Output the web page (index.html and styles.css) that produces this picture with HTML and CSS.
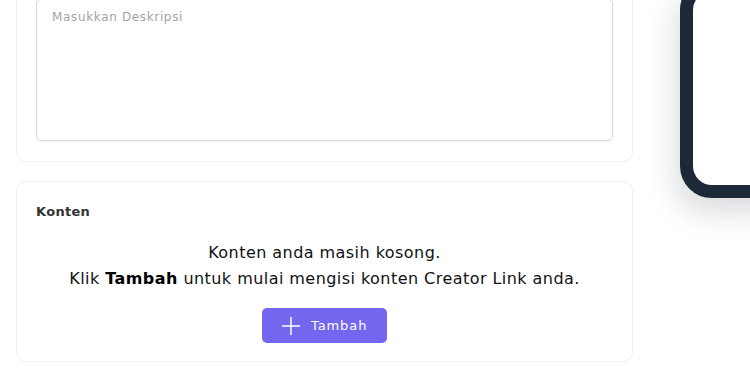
FILE: index.html
```html
<!DOCTYPE html>
<html lang="id">
<head>
<meta charset="utf-8">
<title>Creator Link</title>
<link rel="stylesheet" href="styles.css">
</head>
<body>
<div class="page">
  <div class="main">
    <section class="card">
      <textarea class="textarea" placeholder="Masukkan Deskripsi"></textarea>
    </section>
    <section class="card card-content">
      <div class="label">Konten</div>
      <div class="empty">
        <p class="empty-text">Konten anda masih kosong.<br>Klik <b>Tambah</b> untuk mulai mengisi konten Creator Link anda.</p>
        <button class="btn" type="button">
          <svg class="btn-icon" width="20" height="20" viewBox="0 0 20 20" aria-hidden="true"><path d="M10 1.5V18.5M1.5 10H18.5" stroke="#fff" stroke-width="1.5" stroke-linecap="round" fill="none"/></svg>
          <span>Tambah</span>
        </button>
      </div>
    </section>
  </div>
  <aside class="phone-col">
    <div class="phone"></div>
  </aside>
</div>
</body>
</html>
```

FILE: styles.css
```css
* { box-sizing: border-box; }
html, body { margin: 0; padding: 0; background: #fff; overflow: hidden; }
body { font-family: "DejaVu Sans", "Noto Sans", sans-serif; color: #111; }
.page {
  display: flex;
  align-items: flex-start;
  padding-left: 16px;
  margin-top: -22px;
  width: 1100px;
}
.main {
  width: 617px;
  flex: none;
  display: flex;
  flex-direction: column;
  gap: 19px;
}
.card {
  border: 1px solid #efefef;
  border-radius: 10px;
  background: #fff;
  padding: 20px 19px 20px 19px;
}
.card-content { padding-bottom: 18px; }
.label {
  font-size: 13px;
  line-height: 20px;
  font-weight: 600;
  letter-spacing: 0.3px;
  color: #333;
  margin-bottom: 18px;
}
.textarea {
  display: block;
  width: 100%;
  height: 142px;
  border: 1px solid #dcdcdc;
  border-radius: 5px;
  box-shadow: 0 1px 2px rgba(0,0,0,0.06);
  padding: 8px 15px;
  font-family: inherit;
  font-size: 12px;
  line-height: 18px;
  letter-spacing: 0.65px;
  resize: none;
  outline: none;
  color: #333;
}
.textarea::placeholder { color: #a3a3a8; }
.empty {
  display: flex;
  flex-direction: column;
  align-items: center;
  gap: 16px;
}
.empty-text {
  margin: 0;
  text-align: center;
  font-size: 16px;
  line-height: 26px;
  letter-spacing: 0.45px;
  color: #111;
}
.empty-text b { font-weight: 700; color: #000; }
.btn {
  display: flex;
  align-items: center;
  gap: 10px;
  height: 35px;
  width: 125px;
  padding: 0 19px;
  border: none;
  border-radius: 5px;
  background: #7367f0;
  color: #fff;
  font-family: inherit;
  font-size: 13px;
  letter-spacing: 0.9px;
}
.btn-icon { flex: none; }
.phone-col {
  flex: none;
  margin-left: 47px;
}
.phone {
  width: 320px;
  height: 220px;
  border: 13px solid #1e2938;
  border-radius: 32px;
  background: #fff;
  box-shadow: -4px 14px 30px rgba(20, 30, 50, 0.16);
}
```
